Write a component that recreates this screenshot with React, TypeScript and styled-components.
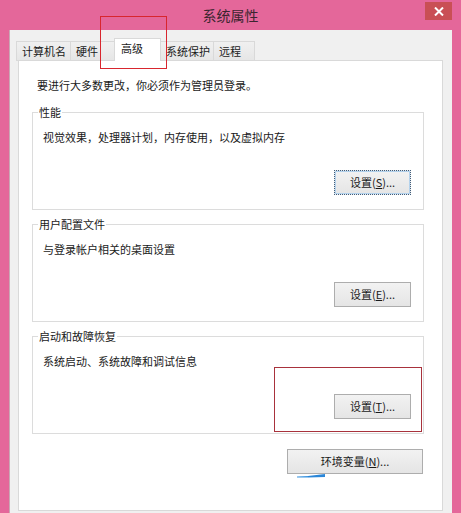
import styled, { createGlobalStyle } from "styled-components";

const GlobalStyle = createGlobalStyle`
  html, body {
    margin: 0;
    padding: 0;
    background: #ffffff;
  }
  body {
    font-family: "Noto Sans CJK SC", "Noto Sans", sans-serif;
    font-size: 11px;
    color: #1a1a1a;
  }
`;

type TabItem = { label: string; width: number; active?: boolean };

const tabs: TabItem[] = [
  { label: "计算机名", width: 55 },
  { label: "硬件", width: 45 },
  { label: "高级", width: 47, active: true },
  { label: "系统保护", width: 54 },
  { label: "远程", width: 42 },
];

type Group = { title: string; desc: string; label: string; hotkey: string; focused?: boolean };

const groups: Group[] = [
  { title: "性能", desc: "视觉效果，处理器计划，内存使用，以及虚拟内存", label: "设置", hotkey: "S", focused: true },
  { title: "用户配置文件", desc: "与登录帐户相关的桌面设置", label: "设置", hotkey: "E" },
  { title: "启动和故障恢复", desc: "系统启动、系统故障和调试信息", label: "设置", hotkey: "T" },
];

export default function App(): JSX.Element {
  return (
    <>
      <GlobalStyle />
      <Window>
        <TitleBar>
          <span />
          <Title>系统属性</Title>
          <CloseButton>
            <svg width="10" height="9" viewBox="0 0 10 9">
              <path d="M1 0.5 L9 8.5 M9 0.5 L1 8.5" stroke="#fff" strokeWidth="2" />
            </svg>
          </CloseButton>
        </TitleBar>

        <Body>
          <TabRow>
            {tabs.map((t) => (
              <Tab key={t.label} $width={t.width} $active={t.active}>
                {t.label}
              </Tab>
            ))}
          </TabRow>

          <Panel>
            <Intro>要进行大多数更改，你必须作为管理员登录。</Intro>

            {groups.map((g) => (
              <GroupBox key={g.title}>
                <Legend>{g.title}</Legend>
                <GroupContent>
                  <Desc>{g.desc}</Desc>
                  <ButtonRow>
                    <Button $width={77} $focused={g.focused}>
                      {g.label}(<u>{g.hotkey}</u>)...
                    </Button>
                  </ButtonRow>
                </GroupContent>
              </GroupBox>
            ))}

            <Footer>
              <Button $width={136}>
                环境变量(<u>N</u>)...
              </Button>
            </Footer>
          </Panel>
        </Body>

        {/* red annotation boxes drawn over the screenshot */}
        <Mark $x={100} $y={16} $w={67} $h={53} $color="#d8262e" />
        <Mark $x={274} $y={367} $w={148} $h={65} $color="#a8323c" />
        <Blip width="30" height="6" viewBox="0 0 30 6">
          <path d="M0 2.6 L11 2 L11 3.4 L0 3.6 Z" fill="#3d95e0" />
          <path d="M11 2 L28 0 L28 3 L11 3.4 Z" fill="#2a86d8" />
        </Blip>
      </Window>
    </>
  );
}

const Window = styled.div`
  position: relative;
  width: 461px;
  height: 513px;
  background: #e4679a;
  display: flex;
  flex-direction: column;
  overflow: hidden;
`;

const TitleBar = styled.div`
  height: 30px;
  display: grid;
  grid-template-columns: 1fr auto 1fr;
  align-items: start;
`;

const Title = styled.div`
  font-size: 14px;
  line-height: 30px;
  color: #3c2530;
`;

const CloseButton = styled.div`
  justify-self: end;
  margin: 2px 9px 0 0;
  width: 27px;
  height: 18px;
  background: #c94f55;
  display: flex;
  align-items: center;
  justify-content: center;
`;

const Body = styled.div`
  flex: 1;
  margin: 0 9px;
  padding: 8px 9px 2px 8px;
  background: #f0f0f0;
  border-left: 1px solid #c9a8b4;
  display: flex;
  flex-direction: column;
  box-sizing: border-box;
`;

const TabRow = styled.div`
  display: flex;
  align-items: flex-end;
  height: 23px;
  margin-left: -1px;
`;

const Tab = styled.div<{ $width: number; $active?: boolean }>`
  box-sizing: border-box;
  width: ${(p) => p.$width}px;
  height: ${(p) => (p.$active ? 23 : 20)}px;
  padding: ${(p) => (p.$active ? "2px 0 0 6px" : "2px 0 0 5px")};
  line-height: 15px;
  border: 1px solid #d9d9d9;
  border-bottom: ${(p) => (p.$active ? "none" : "1px solid #d9d9d9")};
  margin-left: -1px;
  background: ${(p) => (p.$active ? "#ffffff" : "linear-gradient(#f0f0f0, #e6e6e6)")};
  position: relative;
  z-index: ${(p) => (p.$active ? 2 : 0)};
  white-space: nowrap;
`;

const Panel = styled.div`
  flex: 1;
  margin-top: -1px;
  background: #ffffff;
  border: 1px solid #d9d9d9;
  padding: 17px 18px 0 13px;
  display: flex;
  flex-direction: column;
`;

const Intro = styled.div`
  line-height: 15px;
  padding-left: 5px;
  margin-bottom: 12px;
`;

const GroupBox = styled.fieldset`
  margin: 0 0 7px;
  padding: 0 12px 14px 5px;
  border: 1px solid #dcdcdc;
  min-width: 0;
`;

const Legend = styled.legend`
  padding: 0 1px;
  line-height: 15px;
`;

const GroupContent = styled.div`
  height: 65px;
  margin: 10px 0 0 5px;
  display: flex;
  flex-direction: column;
`;

const Desc = styled.div`
  line-height: 15px;
`;

const ButtonRow = styled.div`
  margin-top: auto;
  display: flex;
  justify-content: flex-end;
`;

const Button = styled.div<{ $width: number; $focused?: boolean }>`
  box-sizing: border-box;
  width: ${(p) => p.$width}px;
  height: 25px;
  border: 1px ${(p) => (p.$focused ? "dotted #3f5d7c" : "solid #adadad")};
  box-shadow: ${(p) => (p.$focused ? "inset 0 0 0 1px #b4d2ec" : "none")};
  background: linear-gradient(#f2f2f2, #e5e5e5);
  display: flex;
  align-items: center;
  justify-content: center;
  line-height: 15px;
`;

const Footer = styled.div`
  margin-top: 8px;
  padding-right: 1px;
  display: flex;
  justify-content: flex-end;
`;

const Mark = styled.div<{ $x: number; $y: number; $w: number; $h: number; $color: string }>`
  position: absolute;
  left: ${(p) => p.$x}px;
  top: ${(p) => p.$y}px;
  width: ${(p) => p.$w}px;
  height: ${(p) => p.$h}px;
  border: 1px solid ${(p) => p.$color};
  box-sizing: border-box;
  z-index: 5;
`;

const Blip = styled.svg`
  position: absolute;
  left: 297px;
  top: 474px;
  z-index: 5;
`;
